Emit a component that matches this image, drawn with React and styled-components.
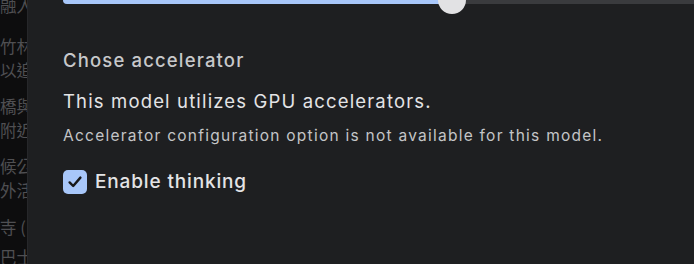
import React from "react";
import styled, { createGlobalStyle } from "styled-components";

const Global = createGlobalStyle`
  html, body { margin: 0; padding: 0; background: #0d0d0e; }
  body { font-family: Inter, "Noto Sans", sans-serif; -webkit-font-smoothing: antialiased; }
`;

const Screen = styled.div`
  display: flex;
  width: 694px;
  height: 264px;
  overflow: hidden;
`;

const Backdrop = styled.div`
  width: 27px;
  flex: none;
  overflow: hidden;
  background: #0d0d0e;
`;

const BgText = styled.div`
  width: 60px;
  margin-top: -7px;
  font-family: "Noto Sans CJK TC", "Noto Sans CJK SC", sans-serif;
  font-size: 16.5px;
  line-height: 24px;
  color: #4f4f52;
`;

const BgPara = styled.p`
  margin: 0 0 ${(p) => p.$gap}px;
  white-space: nowrap;
`;

const Panel = styled.div`
  flex: 1;
  min-width: 0;
  background: #1e1f21;
  border-left: 1px solid #26272a;
  padding-left: 35px;
  display: flex;
  flex-direction: column;
  overflow: hidden;
`;

const SliderWrap = styled.div`
  position: relative;
  margin-top: -4px;
  height: 8px;
  margin-right: -20px;
`;

const Track = styled.div`
  display: flex;
  height: 8px;
  border-radius: 4px;
  overflow: hidden;
  background: #3a3b3e;
`;

const Fill = styled.div`
  background: #a8c7fa;
  height: 100%;
`;

const Thumb = styled.div`
  position: absolute;
  top: -10px;
  width: 28px;
  height: 28px;
  margin-left: -14px;
  border-radius: 50%;
  background: #e2e2e4;
`;

const Title = styled.div`
  margin-top: 44px;
  font-size: 18.5px;
  font-weight: 500;
  letter-spacing: 1.15px;
  line-height: 24px;
  color: #c7c8ca;
`;

const Body = styled.div`
  margin-top: 17px;
  font-size: 18.5px;
  letter-spacing: 1.15px;
  line-height: 24px;
  color: #e4e4e6;
`;

const Note = styled.div`
  margin-top: 12px;
  font-size: 15.5px;
  letter-spacing: 1.25px;
  line-height: 22px;
  color: #c4c5c7;
`;

const CheckRow = styled.label`
  margin-top: 23px;
  display: flex;
  align-items: center;
  gap: 8px;
`;

const Box = styled.span`
  width: 24px;
  height: 24px;
  border-radius: 5px;
  background: #a8c7fa;
  display: flex;
  align-items: center;
  justify-content: center;
  flex: none;
`;

const CheckLabel = styled.span`
  font-size: 19px;
  font-weight: 500;
  letter-spacing: 0.85px;
  color: #e4e4e6;
  line-height: 24px;
`;

const bgParas = [
  { lines: ["融入"], gap: 17 },
  { lines: ["竹林", "以追"], gap: 12 },
  { lines: ["橋與", "附近"], gap: 12 },
  { lines: ["候公", "外活"], gap: 13 },
  { lines: ["寺 ("], gap: 6 },
  { lines: ["巴士"], gap: 0 },
];

export default function App() {
  const pct = 389;
  return (
    <>
      <Global />
      <Screen>
        <Backdrop>
          <BgText>
            {bgParas.map((p, i) => (
              <BgPara key={i} $gap={p.gap}>
                {p.lines.map((l, j) => (
                  <div key={j}>{l}</div>
                ))}
              </BgPara>
            ))}
          </BgText>
        </Backdrop>
        <Panel>
          <SliderWrap>
            <Track>
              <Fill style={{ width: pct }} />
            </Track>
            <Thumb style={{ left: pct }} />
          </SliderWrap>
          <Title>Chose accelerator</Title>
          <Body>This model utilizes GPU accelerators.</Body>
          <Note>Accelerator configuration option is not available for this model.</Note>
          <CheckRow>
            <Box>
              <svg width="16" height="16" viewBox="0 0 16 16" fill="none">
                <path d="M2.6 8.4 L6.2 12 L13.4 3.6" stroke="#17181a" strokeWidth="2.4" strokeLinecap="round" strokeLinejoin="round" />
              </svg>
            </Box>
            <CheckLabel>Enable thinking</CheckLabel>
          </CheckRow>
        </Panel>
      </Screen>
    </>
  );
}
